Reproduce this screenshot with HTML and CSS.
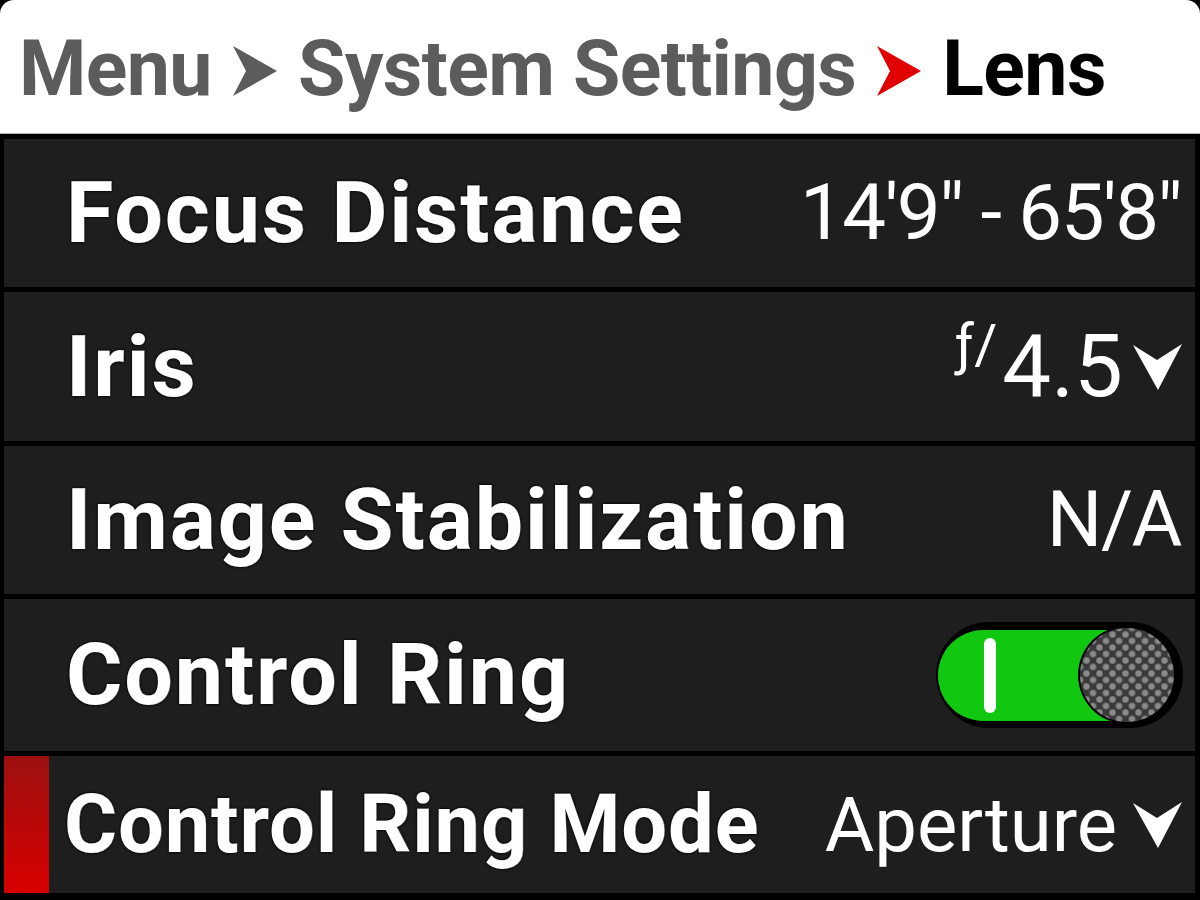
FILE: index.html
```html
<!DOCTYPE html>
<html>
<head>
<meta charset="utf-8">
<link rel="stylesheet" href="styles.css">
</head>
<body>
<div class="screen">
  <header class="crumbs">
    <span class="crumb">Menu</span>
    <svg class="sep" viewBox="0 0 44 50"><polygon points="0,0 44,25 0,50 13,25" fill="#5c5c5c"/></svg>
    <span class="crumb">System Settings</span>
    <svg class="sep" viewBox="0 0 44 50"><polygon points="0,0 44,25 0,50 13,25" fill="#e00000"/></svg>
    <span class="crumb current">Lens</span>
  </header>
  <main class="list">
    <div class="row">
      <span class="marker"></span>
      <span class="label">Focus Distance</span>
      <span class="value">14'9" - 65'8"</span>
    </div>
    <div class="row">
      <span class="marker"></span>
      <span class="label">Iris</span>
      <span class="value iris"><span class="fstop">ƒ/</span><span>4.5</span>
        <svg class="chev" viewBox="0 0 49 46"><polygon points="0,1 25,46 49,0 24,16" fill="#fff"/></svg></span>
    </div>
    <div class="row">
      <span class="marker"></span>
      <span class="label">Image Stabilization</span>
      <span class="value">N/A</span>
    </div>
    <div class="row">
      <span class="marker"></span>
      <span class="label">Control Ring</span>
      <span class="toggle"><span class="track"><span class="bar"></span></span><span class="knob"></span></span>
    </div>
    <div class="row selected">
      <span class="marker"></span>
      <span class="label">Control Ring Mode</span>
      <span class="value mode">Aperture
        <svg class="chev" viewBox="0 0 49 46"><polygon points="0,1 25,46 49,0 24,16" fill="#fff"/></svg></span>
    </div>
  </main>
</div>
</body>
</html>
```
FILE: styles.css
```css
html, body {
  margin: 0;
  padding: 0;
  background: #000;
}
.screen {
  width: 1200px;
  height: 900px;
  display: flex;
  flex-direction: column;
  overflow: hidden;
  background: #000;
  font-family: Roboto, "Liberation Sans", sans-serif;
}
.crumbs {
  height: 134px;
  flex: none;
  box-sizing: border-box;
  background: #fff;
  border-radius: 14px 14px 0 0;
  border-bottom: 1px solid #b4b4b4;
  display: flex;
  align-items: center;
  padding: 6px 0 0 19px;
  gap: 21px;
}
.crumb {
  font-weight: 700;
  font-size: 77px;
  color: #5c5c5c;
  line-height: 1;
  letter-spacing: -0.6px;
}
.crumb.current {
  color: #000;
}
.sep {
  width: 44px;
  height: 50px;
  flex: none;
  margin-top: 2px;
}
.list {
  flex: 1;
  display: grid;
  grid-template-rows: 148px 149px 148px 152px 1fr;
  gap: 5px;
  padding: 5px 5px 7px 4px;
}
.row {
  background: #1e1e1e;
  display: flex;
  align-items: center;
  color: #fff;
}
.marker {
  width: 45px;
  align-self: stretch;
  flex: none;
}
.selected .marker {
  background: linear-gradient(#9c1010, #d80000);
}
.label {
  margin-left: 17px;
  font-weight: 700;
  font-size: 86px;
  letter-spacing: 2px;
  line-height: 1;
  text-shadow: 0 0 3px #000, 0 0 2px #000, 0.4px 0 0 #fff;
  flex: 1;
}
.selected .label {
  font-size: 81px;
  letter-spacing: 1px;
  margin-left: 15px;
}
.value {
  font-size: 78px;
  letter-spacing: -1.5px;
  line-height: 1;
  margin-right: 14px;
  display: flex;
  align-items: center;
}
.value.mode {
  font-size: 76px;
  letter-spacing: 0;
  margin-right: 13px;
}
.iris {
  font-size: 87px;
  letter-spacing: 0;
  margin-right: 13px;
}
.fstop {
  font-size: 56px;
  align-self: flex-start;
  margin-top: -6px;
  margin-right: 5px;
}
.chev {
  width: 49px;
  height: 46px;
  margin-left: 16px;
  flex: none;
}
.iris .chev {
  margin-left: 10px;
}
.toggle {
  margin-right: 12px;
  width: 247px;
  height: 106px;
  box-sizing: border-box;
  background: #000;
  border-radius: 53px;
  display: flex;
  align-items: center;
  padding: 0 4px 0 2px;
}
.track {
  width: 190px;
  height: 91px;
  background: #11c811;
  border-radius: 46px 0 0 46px;
  display: flex;
  align-items: center;
  padding-left: 46px;
  box-sizing: border-box;
}
.bar {
  width: 12px;
  height: 75px;
  border-radius: 6px;
  background: #fff;
}
.knob {
  width: 94px;
  height: 94px;
  border-radius: 50%;
  flex: none;
  margin-left: -48px;
  background-color: #3a3a3a;
  background-image: radial-gradient(circle, #8a8a8a 0 2.5px, transparent 4px),
                    radial-gradient(circle, #8a8a8a 0 2.5px, transparent 4px);
  background-size: 13px 13px;
  background-position: 0 0, 6.5px 6.5px;
  box-shadow: 0 0 0 2px #000;
}
```
